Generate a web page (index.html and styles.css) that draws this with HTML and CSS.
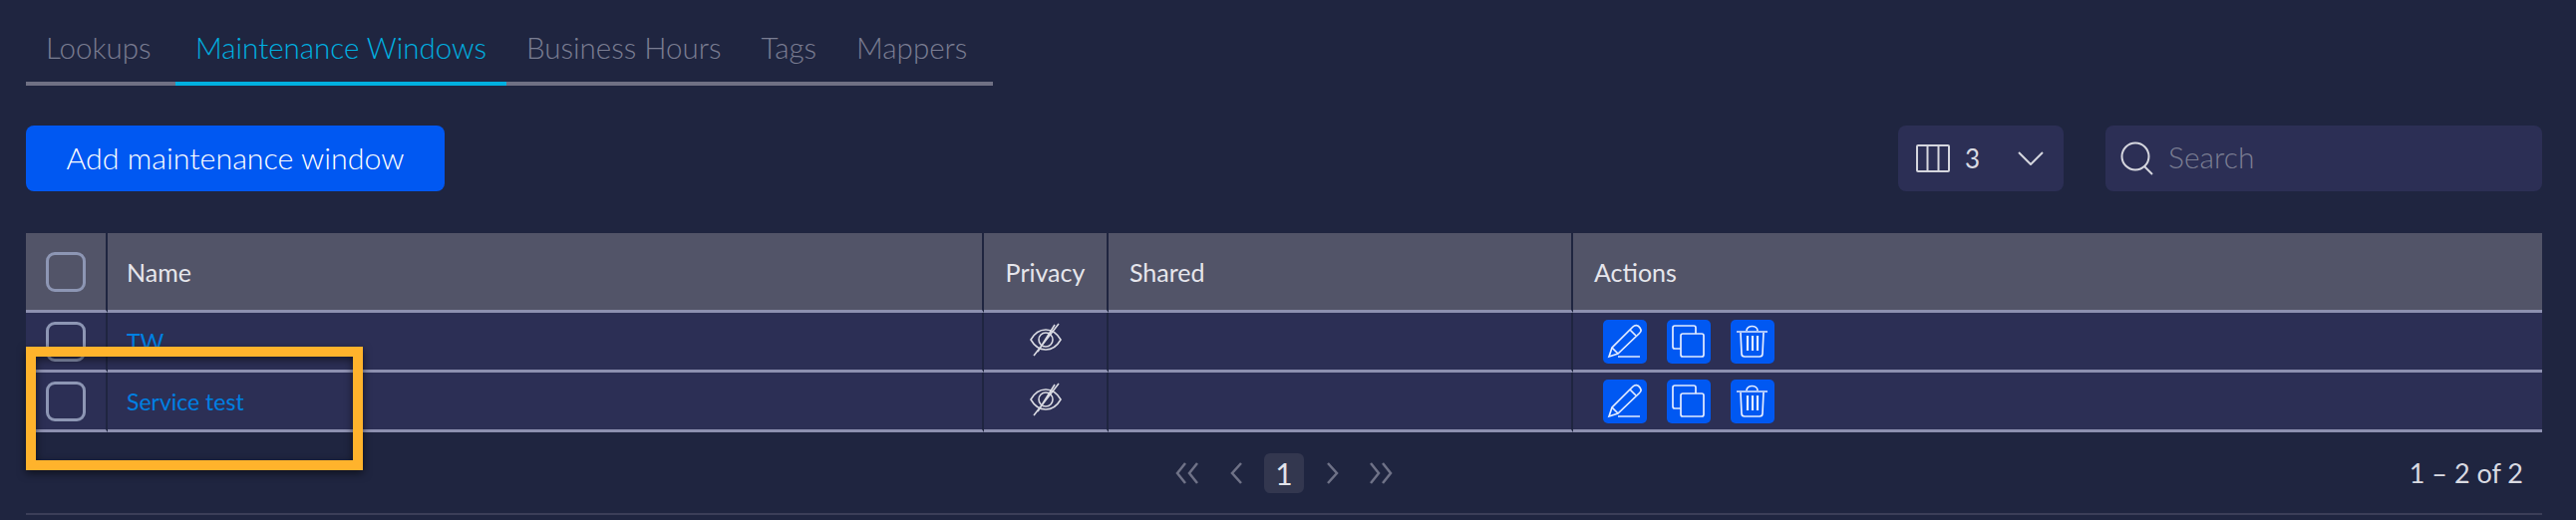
FILE: index.html
```html
<!DOCTYPE html>
<html>
	<head>
		<meta charset="UTF-8">
		<title>Maintenance Windows</title>
		<link rel="stylesheet" href="styles.css">
	</head>
	<body>
		<div class="page">
			<ul class="tabs">
				<li>Lookups</li>
				<li class="ac">Maintenance Windows</li>
				<li>Business Hours</li>
				<li>Tags</li>
				<li>Mappers</li>
			</ul>

			<div class="toolbar">
				<a href="#" class="add-btn">Add maintenance window</a>
				<div class="toolbar-right">
					<div class="col-picker">
						<svg class="col-icon" width="34" height="28" viewBox="0 0 34 28" fill="none" stroke="#d5d6de" stroke-width="2"><rect x="1" y="1" width="32" height="26" rx="1"/><path d="M11.5 1v26M22.5 1v26"/></svg>
						<span class="col-num">3</span>
						<svg class="col-arrow" width="26" height="14" viewBox="0 0 26 14" fill="none" stroke="#d5d6de" stroke-width="2"><path d="M1 1l12 12L25 1"/></svg>
					</div>
					<div class="search">
						<svg width="34" height="34" viewBox="0 0 34 34" fill="none" stroke="#d5d6de" stroke-width="2"><circle cx="15" cy="15" r="13.5"/><path d="M24 25l8 8"/></svg>
						<span class="search-text">Search</span>
					</div>
				</div>
			</div>

			<div class="table-wrap">
				<table>
					<colgroup>
						<col class="c-check">
						<col class="c-name">
						<col class="c-privacy">
						<col class="c-shared">
						<col>
					</colgroup>
					<thead>
						<tr>
							<th><span class="check"></span></th>
							<th>Name</th>
							<th class="center">Privacy</th>
							<th>Shared</th>
							<th>Actions</th>
						</tr>
					</thead>
					<tbody>
						<tr>
							<td><span class="check"></span></td>
							<td><a href="#" class="link">TW</a></td>
							<td class="center">
								<svg class="eye" width="34" height="36" viewBox="0 0 34 36" fill="none" stroke="#d9dae2" stroke-width="1.6"><path d="M2 18c4-7 9-10 15-10s11 3 15 10c-4 7-9 10-15 10S6 25 2 18z"/><circle cx="17" cy="18" r="7"/><path d="M30 2L5 34M26 3L9 30"/></svg>
							</td>
							<td></td>
							<td>
								<div class="actions">
									<a href="#" class="act"><svg width="44" height="44" viewBox="0 0 44 44" fill="none" stroke="#e4ecff" stroke-width="1.7"><path d="M6 37l3-9L30 7c2-2 5-2 7 1s1 4-1 6L15 34z"/><path d="M9 28l6 6M27 10l6 6M15 37h22"/></svg></a>
									<a href="#" class="act"><svg width="44" height="44" viewBox="0 0 44 44" fill="none" stroke="#e4ecff" stroke-width="1.7"><path d="M14 29H8a2 2 0 0 1-2-2V8a2 2 0 0 1 2-2h19a2 2 0 0 1 2 2v6"/><rect x="14" y="14" width="23" height="23" rx="2"/></svg></a>
									<a href="#" class="act"><svg width="44" height="44" viewBox="0 0 44 44" fill="none" stroke="#e4ecff" stroke-width="1.7"><path d="M6 12h31M16 11c0-6 11-6 11 0M10 13l1 21c0 2 1 3 3 3h15c2 0 3-1 3-3l1-21"/><path d="M17 16v15M22 16v15M27 16v15" stroke-width="2.200"/></svg></a>
								</div>
							</td>
						</tr>
						<tr>
							<td><span class="check"></span></td>
							<td><a href="#" class="link">Service test</a></td>
							<td class="center">
								<svg class="eye" width="34" height="36" viewBox="0 0 34 36" fill="none" stroke="#d9dae2" stroke-width="1.6"><path d="M2 18c4-7 9-10 15-10s11 3 15 10c-4 7-9 10-15 10S6 25 2 18z"/><circle cx="17" cy="18" r="7"/><path d="M30 2L5 34M26 3L9 30"/></svg>
							</td>
							<td></td>
							<td>
								<div class="actions">
									<a href="#" class="act"><svg width="44" height="44" viewBox="0 0 44 44" fill="none" stroke="#e4ecff" stroke-width="1.7"><path d="M6 37l3-9L30 7c2-2 5-2 7 1s1 4-1 6L15 34z"/><path d="M9 28l6 6M27 10l6 6M15 37h22"/></svg></a>
									<a href="#" class="act"><svg width="44" height="44" viewBox="0 0 44 44" fill="none" stroke="#e4ecff" stroke-width="1.7"><path d="M14 29H8a2 2 0 0 1-2-2V8a2 2 0 0 1 2-2h19a2 2 0 0 1 2 2v6"/><rect x="14" y="14" width="23" height="23" rx="2"/></svg></a>
									<a href="#" class="act"><svg width="44" height="44" viewBox="0 0 44 44" fill="none" stroke="#e4ecff" stroke-width="1.7"><path d="M6 12h31M16 11c0-6 11-6 11 0M10 13l1 21c0 2 1 3 3 3h15c2 0 3-1 3-3l1-21"/><path d="M17 16v15M22 16v15M27 16v15" stroke-width="2.200"/></svg></a>
								</div>
							</td>
						</tr>
					</tbody>
				</table>
				<div class="callout"></div>
			</div>

			<div class="table-foot">
				<div class="pager">
					<svg width="24" height="22" viewBox="0 0 24 22" fill="none" stroke="#6f7287" stroke-width="2.500"><path d="M10 1L2 11l8 10M22 1l-8 10 8 10"/></svg>
					<svg class="p-one" width="13" height="22" viewBox="0 0 13 22" fill="none" stroke="#6f7287" stroke-width="2.500"><path d="M11 1L2 11l9 10"/></svg>
					<span class="p-cur">1</span>
					<svg class="p-one" width="13" height="22" viewBox="0 0 13 22" fill="none" stroke="#6f7287" stroke-width="2.500"><path d="M2 1l9 10-9 10"/></svg>
					<svg width="24" height="22" viewBox="0 0 24 22" fill="none" stroke="#6f7287" stroke-width="2.500"><path d="M2 1l8 10-8 10M14 1l8 10-8 10"/></svg>
				</div>
				<div class="count">1 – 2 of 2</div>
			</div>
		</div>
	</body>
</html>
```

FILE: styles.css
```css
* {
	margin: 0;
	padding: 0;
	box-sizing: border-box;
}
html, body {
	height: 100%;
	overflow: hidden;
}
body {
	background: #1f2540;
	font-family: "Lato", "Liberation Sans", sans-serif;
	font-weight: 300;
	color: #d9dae2;
}
li {
	list-style: none;
}
a {
	text-decoration: none;
}
.page {
	padding: 0 34px 0 26px;
}

/* tabs */
.tabs {
	display: flex;
	width: 970px;
	height: 86px;
	border-bottom: 4px solid #6f7084;
}
.tabs li {
	height: 86px;
	padding: 28px 20px 0;
	font-size: 29.5px;
	line-height: 40px;
	color: #7a7d92;
	border-bottom: 4px solid #6f7084;
}
.tabs li:first-child {
	width: 150px;
}
.tabs li.ac {
	color: #00b0e0;
	border-bottom-color: #00b0e0;
}

/* toolbar */
.toolbar {
	display: flex;
	justify-content: space-between;
	margin-top: 40px;
}
.add-btn {
	display: block;
	width: 420px;
	height: 66px;
	line-height: 64px;
	text-align: center;
	border-radius: 8px;
	background: #0058f2;
	color: #fff;
	font-size: 30.4px;
	font-weight: 300;
}
.toolbar-right {
	display: flex;
	gap: 42px;
}
.col-picker, .search {
	display: flex;
	align-items: center;
	height: 66px;
	border-radius: 8px;
	background: #2c2f55;
}
.col-picker {
	width: 166px;
	padding-left: 18px;
}
.col-num {
	margin-left: 15px;
	font-size: 26px;
	font-weight: 400;
}
.col-arrow {
	margin-left: 38px;
}
.search {
	width: 438px;
	padding-left: 15px;
}
.search-text {
	margin-left: 14px;
	margin-top: -4px;
	font-size: 30px;
	color: #7a7d92;
}

/* table */
.table-wrap {
	position: relative;
	margin-top: 42px;
}
table {
	width: 100%;
	table-layout: fixed;
	border-collapse: separate;
	border-spacing: 0;
}
.c-check {
	width: 82px;
}
.c-name {
	width: 879px;
}
.c-privacy {
	width: 125px;
}
.c-shared {
	width: 466px;
}
th, td {
	height: 60px;
	padding: 0 21px;
	text-align: left;
	vertical-align: middle;
	border-bottom: 3px solid #8d90b0;
	border-right: 2px solid #1f2540;
}
th:last-child, td:last-child {
	border-right: 0;
}
th:first-child, td:first-child {
	padding: 0 0 0 20px;
}
th:nth-child(2), td:nth-child(2) {
	padding-left: 19px;
}
th {
	height: 80px;
	background: #525468;
	font-size: 25px;
	font-weight: 400;
	color: #e6e6ec;
}
td {
	background: #2c2f55;
	font-size: 23px;
}
th.center, td.center {
	padding: 0;
	text-align: center;
}
.check {
	display: block;
	width: 40px;
	height: 40px;
	border: 3px solid #8d96b4;
	border-radius: 9px;
}
.link {
	color: #0080e2;
	font-weight: 400;
}
.eye {
	display: block;
	margin: 0 auto 4px;
}
.actions {
	display: flex;
	gap: 20px;
	padding-left: 9px;
}
.act {
	display: flex;
	align-items: center;
	justify-content: center;
	width: 44px;
	height: 44px;
	border-radius: 5px;
	background: #0058f2;
}

/* orange annotation box */
.callout {
	position: absolute;
	left: 0;
	top: 114px;
	width: 338px;
	height: 124px;
	border: 10px solid #ffb32c;
	filter: drop-shadow(0 3px 4px rgba(0,0,0,0.55));
}

/* footer */
.table-foot {
	display: grid;
	grid-template-columns: 1fr auto 1fr;
	align-items: center;
	height: 83px;
	border-bottom: 2px solid #3b3e58;
}
.pager {
	grid-column: 2;
	display: flex;
	align-items: center;
}
.p-one {
	margin: 0 21px 0 31px;
}
.p-one:nth-child(4) {
	margin: 0 30px 0 22px;
}
.p-cur {
	width: 40px;
	height: 40px;
	line-height: 40px;
	text-align: center;
	border-radius: 6px;
	background: #33374f;
	font-size: 30px;
	font-weight: 400;
	color: #e2e3ea;
}
.count {
	grid-column: 3;
	justify-self: end;
	padding-right: 19px;
	font-size: 27px;
	font-weight: 400;
}
```
